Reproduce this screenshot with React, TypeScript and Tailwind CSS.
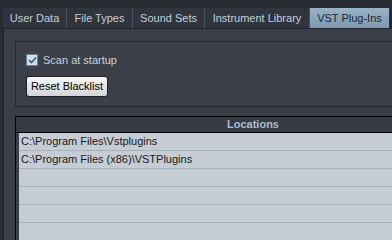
export default function App() {
  const tabs = [
    { label: "User Data", w: "w-[64px]" },
    { label: "File Types", w: "w-[66px]" },
    { label: "Sound Sets", w: "w-[72px]" },
    { label: "Instrument Library", w: "w-[105px]" },
  ];
  const rows = ["C:\\Program Files\\Vstplugins", "C:\\Program Files (x86)\\VSTPlugins", "", "", "", "", ""];

  return (
    <div
      className="w-screen h-screen min-h-[213px] overflow-hidden bg-[#282c33] pt-[8px] pl-[3px] text-[11px] leading-none"
      style={{ fontFamily: '"Liberation Sans", Arial, sans-serif' }}
    >
      {/* tab strip */}
      <div className="flex h-[20px] w-[388px] bg-[#30343c] border-r border-[#1f2227]">
        {tabs.map((t) => (
          <div
            key={t.label}
            className={`${t.w} flex items-center justify-center border-r border-[#4a505a] text-[#c3cfdb]`}
          >
            {t.label}
          </div>
        ))}
        <div className="w-[79px] flex items-center justify-center bg-gradient-to-b from-[#9ab3c8] to-[#7d98b0] text-[#1c2834]">
          VST Plug-Ins
        </div>
      </div>

      {/* content panel */}
      <div className="w-[520px] h-[400px] border-t border-l border-[#202328] bg-[#393e47] pt-[12px] pl-[11px]">
        {/* group box */}
        <div className="w-[500px] h-[66px] border border-[#25282e] bg-[#3a3f48] pt-[12px] pl-[10px]">
          <label className="flex items-center gap-[5px] h-[12px] text-[#c8d3de]">
            <span className="w-[12px] h-[12px] border border-[#6d7f92] bg-[#c9e0f3] flex items-center justify-center">
              <svg width="9" height="8" viewBox="0 0 9 8">
                <path d="M1 4 L3.5 6.5 L8 1.5" fill="none" stroke="#4b5663" strokeWidth="1.6" />
              </svg>
            </span>
            Scan at startup
          </label>
          <button className="mt-[10px] w-[82px] h-[21px] rounded-[3px] border border-[#1e2126] bg-gradient-to-b from-[#f7f7f7] to-[#d2d4d7] text-black text-[11px] flex items-center justify-center">
            Reset Blacklist
          </button>
        </div>

        {/* table */}
        <div className="mt-[9px] w-[500px] border border-black">
          <div className="h-[16px] bg-[#363b44] border-b border-black flex items-center">
            <div className="w-[474px] text-center font-bold text-[#a9bdd5]">Locations</div>
          </div>
          <div className="flex">
            <div className="w-[3px] bg-[#3a3f48]" />
            <div className="flex-1">
              {rows.map((r, i) => (
                <div
                  key={i}
                  className="h-[18px] bg-[#c6ccd3] border-b border-[#a8b0b9] pl-[2px] flex items-center text-[#1a1a1a]"
                >
                  {r}
                </div>
              ))}
            </div>
          </div>
        </div>
      </div>
    </div>
  );
}
